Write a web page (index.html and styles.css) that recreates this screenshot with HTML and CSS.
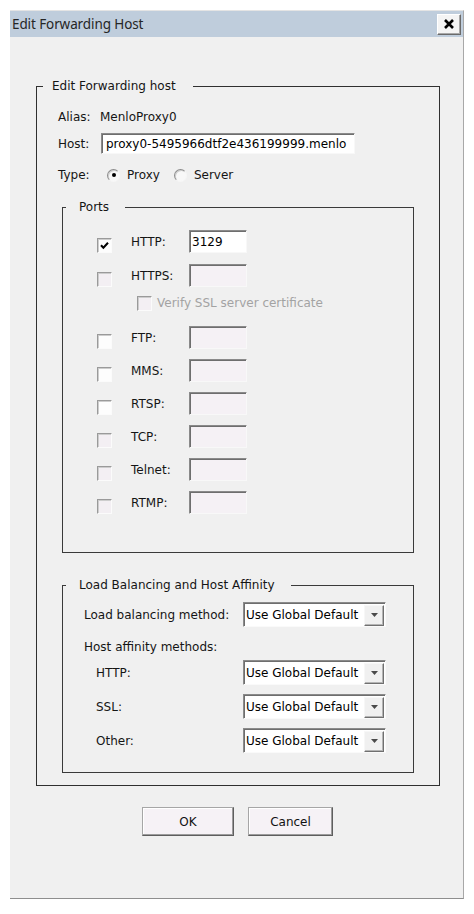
FILE: index.html
```html
<!DOCTYPE html>
<html lang="en">
<head>
<meta charset="utf-8">
<title>Edit Forwarding Host</title>
<link rel="stylesheet" href="styles.css">
</head>
<body>
<div class="window">
  <div class="titlebar">
    <span class="title">Edit Forwarding Host</span>
    <span class="close" aria-label="Close">
      <svg width="12" height="12" viewBox="0 0 12 12"><path d="M2 2 L10 10 M10 2 L2 10" stroke="#000" stroke-width="2.6" fill="none"/></svg>
    </span>
  </div>
  <div class="client">
    <fieldset class="group outer">
      <legend class="legend-outer">Edit Forwarding host</legend>
      <div class="outer-body">
        <div class="row row-alias"><span class="lbl">Alias:</span><span class="value">MenloProxy0</span></div>
        <div class="row row-host"><span class="lbl">Host:</span><span class="field host-field">proxy0-5495966dtf2e436199999.menlo</span></div>
        <div class="row row-type">
          <span class="lbl">Type:</span>
          <span class="radio checked"></span><span class="opt">Proxy</span>
          <span class="radio radio-2"></span><span class="opt">Server</span>
        </div>

        <fieldset class="group inner ports">
          <legend class="legend-inner">Ports</legend>
          <div class="ports-body">
            <div class="port-row first">
              <span class="chk on checked"><svg width="11" height="11" viewBox="0 0 11 11"><path d="M2 5.2 L4.4 7.8 L9 2.8" stroke="#000" stroke-width="2" fill="none"/></svg></span>
              <span class="plbl">HTTP:</span><span class="field port on">3129</span>
            </div>
            <div class="port-row https">
              <span class="chk"></span><span class="plbl">HTTPS:</span><span class="field port"></span>
            </div>
            <div class="verify-row">
              <span class="chk"></span><span class="disabled-text">Verify SSL server certificate</span>
            </div>
            <div class="port-row ftp">
              <span class="chk on"></span><span class="plbl">FTP:</span><span class="field port"></span>
            </div>
            <div class="port-row">
              <span class="chk on"></span><span class="plbl">MMS:</span><span class="field port"></span>
            </div>
            <div class="port-row">
              <span class="chk on"></span><span class="plbl">RTSP:</span><span class="field port"></span>
            </div>
            <div class="port-row">
              <span class="chk"></span><span class="plbl">TCP:</span><span class="field port"></span>
            </div>
            <div class="port-row">
              <span class="chk"></span><span class="plbl">Telnet:</span><span class="field port"></span>
            </div>
            <div class="port-row">
              <span class="chk"></span><span class="plbl">RTMP:</span><span class="field port"></span>
            </div>
          </div>
        </fieldset>

        <fieldset class="group inner lb">
          <legend class="legend-inner">Load Balancing and Host Affinity</legend>
          <div class="lb-body">
            <div class="lb-row">
              <span class="lb-lbl">Load balancing method:</span>
              <span class="select"><span class="sel-text">Use Global Default</span><span class="sel-btn"><svg width="7" height="4" viewBox="0 0 7 4"><path d="M0 0 H7 L3.5 4 Z" fill="#4a4a4a"/></svg></span></span>
            </div>
            <div class="lb-row heading">Host affinity methods:</div>
            <div class="lb-row sub first-sub">
              <span class="lb-lbl">HTTP:</span>
              <span class="select"><span class="sel-text">Use Global Default</span><span class="sel-btn"><svg width="7" height="4" viewBox="0 0 7 4"><path d="M0 0 H7 L3.5 4 Z" fill="#4a4a4a"/></svg></span></span>
            </div>
            <div class="lb-row sub">
              <span class="lb-lbl">SSL:</span>
              <span class="select"><span class="sel-text">Use Global Default</span><span class="sel-btn"><svg width="7" height="4" viewBox="0 0 7 4"><path d="M0 0 H7 L3.5 4 Z" fill="#4a4a4a"/></svg></span></span>
            </div>
            <div class="lb-row sub">
              <span class="lb-lbl">Other:</span>
              <span class="select"><span class="sel-text">Use Global Default</span><span class="sel-btn"><svg width="7" height="4" viewBox="0 0 7 4"><path d="M0 0 H7 L3.5 4 Z" fill="#4a4a4a"/></svg></span></span>
            </div>
          </div>
        </fieldset>
      </div>
    </fieldset>

    <div class="buttons">
      <span class="btn btn-ok">OK</span>
      <span class="btn btn-cancel">Cancel</span>
    </div>
  </div>
</div>
</body>
</html>
```
FILE: styles.css
```css
html, body {
  margin: 0;
  padding: 0;
  background: #ffffff;
}

body {
  font-family: "DejaVu Sans", "Liberation Sans", sans-serif;
  font-size: 12px;
  color: #151515;
}

.window {
  margin: 10px 0 0 10px;
  width: 454px;
  height: 889px;
  box-sizing: border-box;
  border-top: 1px solid #e4e4e4;
  border-right: 1px solid #a8a8a8;
  border-bottom: 1px solid #8e8e8e;
  background: #f0f0f0;
  display: flex;
  flex-direction: column;
}

.titlebar {
  height: 26px;
  flex: 0 0 26px;
  background: #bfcddc;
  display: flex;
  align-items: center;
  justify-content: space-between;
  padding: 0 2px 0 2px;
}

.title {
  font-family: "Noto Sans", "DejaVu Sans", sans-serif;
  font-size: 13.5px;
  color: #262626;
  letter-spacing: -0.1px;
}

.close {
  width: 24px;
  height: 21px;
  box-sizing: border-box;
  background: #f4f4f4;
  border: 1px solid;
  border-color: #ffffff #6a6a6a #6a6a6a #ffffff;
  box-shadow: inset -1px -1px 0 #a8a8a8;
  display: flex;
  align-items: center;
  justify-content: center;
}

.client {
  flex: 1;
  padding-top: 42px;
}

/* group boxes */
.group {
  margin: 0;
  padding: 0;
  min-width: 0;
  border: 1px solid #3a3a3a;
  box-sizing: border-box;
}

.group legend {
  line-height: 14px;
  height: 14px;
}

.outer {
  margin-left: 26px;
  width: 404px;
  border-color: #303030;
}

.legend-outer {
  margin-left: 6px;
  padding: 0 17px 0 9px;
}

.legend-inner {
  margin-left: 3px;
  padding: 0 16px 0 13px;
}

.outer-body {
  padding: 14px 25px 12px 21px;
}

.row {
  display: flex;
  align-items: center;
}

.row-alias {
  height: 20px;
}

.row-host {
  height: 21px;
  margin-top: 6px;
}

.row-type {
  height: 20px;
  margin-top: 11px;
}

.lbl {
  width: 42px;
  flex: 0 0 42px;
}

/* sunken text fields */
.field {
  box-sizing: border-box;
  display: flex;
  align-items: center;
  border-top: 1px solid #8a8a8a;
  border-left: 1px solid #8a8a8a;
  border-right: 1px solid #f8f8f8;
  border-bottom: 1px solid #f8f8f8;
  box-shadow: inset 1px 1px 0 #6e6e6e;
  background: #f5f1f5;
  color: #000;
  white-space: nowrap;
  overflow: hidden;
}

.host-field {
  width: 254px;
  height: 21px;
  margin-left: 1px;
  padding-left: 4px;
  background: #ffffff;
}

.port {
  width: 58px;
  height: 23px;
  padding-left: 2px;
}

.port.on {
  background: #ffffff;
}

/* radio buttons */
.radio {
  width: 13px;
  height: 13px;
  box-sizing: border-box;
  border-radius: 50%;
  border: 1px solid;
  border-color: #8c8c8c #f6f6f6 #f6f6f6 #8c8c8c;
  box-shadow: inset 1px 1px 0 #cfcfcf;
  background: #f8f8f8;
  margin-left: 7px;
  display: flex;
  align-items: center;
  justify-content: center;
}

.radio.checked::after {
  content: "";
  width: 4px;
  height: 4px;
  border-radius: 50%;
  background: #000;
}

.radio-2 {
  margin-left: 14px;
}

.opt {
  margin-left: 7px;
}

/* ports */
.ports {
  margin-top: 15px;
  margin-left: 4px;
}

.ports-body {
  padding: 16px 0 38px 34px;
}

.port-row {
  display: flex;
  align-items: flex-end;
  height: 23px;
  margin-top: 10px;
}

.port-row.first {
  margin-top: 0;
}

.port-row.https {
  margin-top: 11px;
}

.port-row.ftp {
  margin-top: 15px;
}

.port-row .plbl {
  align-self: center;
  width: 58px;
  margin-left: 19px;
}

.chk {
  width: 15px;
  height: 15px;
  box-sizing: border-box;
  border: 1px solid;
  border-color: #9a9a9a #fbfbfb #fbfbfb #9a9a9a;
  box-shadow: inset 1px 1px 0 #cdcdcd;
  background: #f3eff3;
  display: flex;
  align-items: center;
  justify-content: center;
}

.chk.on {
  background: #fdfdfd;
}

.verify-row {
  display: flex;
  align-items: center;
  height: 16px;
  margin-top: 8px;
  padding-left: 40px;
}

.disabled-text {
  color: #a3a3a3;
  margin-left: 5px;
}

/* load balancing */
.lb {
  margin-top: 25px;
  margin-left: 4px;
}

.lb-body {
  padding: 10px 0 19px 21px;
}

.lb-row {
  display: flex;
  align-items: center;
  height: 25px;
}

.lb-row.heading {
  height: 16px;
  margin-top: 12px;
}

.lb-row.sub {
  padding-left: 12px;
  margin-top: 9px;
}

.lb-row.first-sub {
  margin-top: 5px;
}

.lb-lbl {
  width: 159px;
  flex: 0 0 159px;
}

.sub .lb-lbl {
  width: 147px;
  flex: 0 0 147px;
}

.select {
  width: 143px;
  height: 25px;
  box-sizing: border-box;
  display: flex;
  align-items: center;
  justify-content: space-between;
  border-top: 1px solid #8a8a8a;
  border-left: 1px solid #8a8a8a;
  border-right: 1px solid #fafafa;
  border-bottom: 1px solid #fafafa;
  box-shadow: inset 1px 1px 0 #6e6e6e;
  background: #ffffff;
  padding: 2px 1px 1px 2px;
  color: #000;
}

.sel-text {
  white-space: nowrap;
}

.sel-btn {
  width: 20px;
  height: 21px;
  box-sizing: border-box;
  background: #f0f0f0;
  border: 1px solid;
  border-color: #f7f7f7 #707070 #707070 #f7f7f7;
  box-shadow: inset -1px -1px 0 #b4b4b4;
  display: flex;
  align-items: center;
  justify-content: center;
}

/* buttons */
.buttons {
  display: flex;
  justify-content: center;
  gap: 14px;
  margin-top: 21px;
  padding-left: 2px;
}

.btn {
  height: 29px;
  box-sizing: border-box;
  display: flex;
  align-items: center;
  justify-content: center;
  background: #f6f2f6;
  border: 1px solid;
  border-color: #a6a6a6 #5e5e5e #5e5e5e #a6a6a6;
  box-shadow: inset -1px -1px 0 #9c9c9c, inset 1px 1px 0 #ffffff;
  color: #111;
}

.btn-ok {
  width: 92px;
}

.btn-cancel {
  width: 85px;
}
```
